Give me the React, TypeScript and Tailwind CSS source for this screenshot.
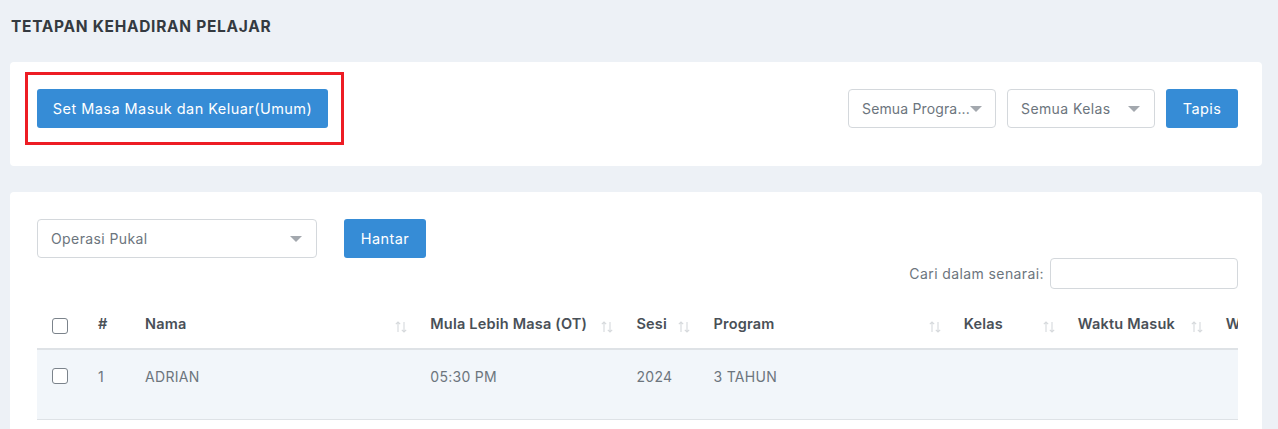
import React from 'react';

const font = { fontFamily: 'Inter, "Noto Sans", sans-serif' };

function Caret() {
  return (
    <svg width="12" height="6" viewBox="0 0 12 6" className="shrink-0">
      <path d="M0 0h12L6 6z" fill="#a3a8ae" />
    </svg>
  );
}

function SortIcon() {
  return (
    <svg width="14" height="14" viewBox="0 0 14 14" className="shrink-0">
      <path d="M4 2v10M1.8 4.2L4 2l2.2 2.2" stroke="#d6d9dc" strokeWidth="1.1" fill="none" />
      <path d="M10 2v10M7.8 9.8L10 12l2.2-2.2" stroke="#d6d9dc" strokeWidth="1.1" fill="none" />
    </svg>
  );
}

function Select({ label, className }: { label: string; className: string }) {
  return (
    <div className={`flex h-[39px] items-center justify-between rounded-[4px] border border-[#d4d8dc] bg-white pl-[13px] text-[14px] text-[#6c757d] ${className}`}>
      <span className="whitespace-nowrap">{label}</span>
      <Caret />
    </div>
  );
}

function Checkbox() {
  return <div className="h-[16px] w-[16px] rounded-[3px] border border-[#7b838b] bg-white" />;
}

const cols = [
  { label: '#', w: 47, sort: false },
  { label: 'Nama', w: 285, sort: true },
  { label: 'Mula Lebih Masa (OT)', w: 206, sort: true },
  { label: 'Sesi', w: 77, sort: true },
  { label: 'Program', w: 250, sort: true },
  { label: 'Kelas', w: 114, sort: true },
  { label: 'Waktu Masuk', w: 148, sort: true },
  { label: 'Waktu Keluar', w: 150, sort: true },
];

const row = ['1', 'ADRIAN', '05:30 PM', '2024', '3 TAHUN', '', '', ''];

export default function App() {
  return (
    <div className="min-h-[429px] w-[1278px] bg-[#edf1f6] pl-[10px] pr-[16px]" style={font}>
      <h1 className="pt-[17px] pl-px text-[15.5px] leading-[20px] font-bold tracking-[0.7px] text-[#343a40]">
        TETAPAN KEHADIRAN PELAJAR
      </h1>

      <div className="mt-[25px] flex h-[104px] items-start justify-between rounded-[4px] bg-white pt-[10px] pl-[15px] pr-[24px]">
        <div className="border-[3px] border-[#ed1c24] py-[14px] pl-[9px] pr-[13px]">
          <button className="h-[39px] w-[291px] rounded-[3px] bg-[#368cd6] text-[14.5px] tracking-[0.45px] text-white">
            Set Masa Masuk dan Keluar(Umum)
          </button>
        </div>
        <div className="flex items-center gap-[11px] pt-[17px]">
          <Select label="Semua Progra..." className="w-[148px] pr-[13px] tracking-[0.15px]" />
          <Select label="Semua Kelas" className="w-[148px] pr-[14px] tracking-[0.4px]" />
          <button className="h-[39px] w-[72px] rounded-[3px] bg-[#368cd6] text-[14.5px] tracking-[0.4px] text-white">Tapis</button>
        </div>
      </div>

      <div className="mt-[26px] rounded-t-[4px] bg-white pl-[27px] pr-[24px] pt-[27px] pb-[10px]">
        <div className="flex items-center gap-[27px]">
          <Select label="Operasi Pukal" className="w-[280px] pr-[14px] tracking-[0.4px]" />
          <button className="h-[39px] w-[82px] rounded-[3px] bg-[#368cd6] text-[14.5px] tracking-[0.4px] text-white">Hantar</button>
        </div>
        <div className="flex items-center justify-end gap-[6px]">
          <span className="text-[14px] tracking-[0.4px] text-[#6c757d]">Cari dalam senarai:</span>
          <div className="h-[31px] w-[188px] rounded-[4px] border border-[#d4d8dc]" />
        </div>
        <div className="mt-[10px] overflow-hidden">
          <table className="table-fixed border-collapse" style={{ width: 1327 }}>
            <colgroup>
              <col style={{ width: 49 }} />
              {cols.map((c) => (
                <col key={c.label} style={{ width: c.w }} />
              ))}
            </colgroup>
            <thead>
              <tr className="h-[50px] border-b-2 border-[#dee2e6]">
                <th className="pl-[15px] align-middle">
                  <div className="pt-[4px]">
                    <Checkbox />
                  </div>
                </th>
                {cols.map((c) => (
                  <th key={c.label} className="pl-[12px] pr-[10px] text-left align-middle">
                    <div className="flex items-center justify-between whitespace-nowrap text-[14.5px] font-semibold tracking-[0.2px] text-[#495057]">
                      <span>{c.label}</span>
                      {c.sort && (
                        <span className="pt-[6px]">
                          <SortIcon />
                        </span>
                      )}
                    </div>
                  </th>
                ))}
              </tr>
            </thead>
            <tbody>
              <tr className="h-[70px] border-b border-[#dee2e6] bg-[#f2f6fa]">
                <td className="pl-[15px] pt-[18px] align-top">
                  <Checkbox />
                </td>
                {row.map((v, i) => (
                  <td key={i} className="pl-[12px] pt-[16px] align-top text-[14px] tracking-[0.3px] whitespace-nowrap text-[#6c757d]">
                    {v}
                  </td>
                ))}
              </tr>
            </tbody>
          </table>
        </div>
      </div>
    </div>
  );
}
